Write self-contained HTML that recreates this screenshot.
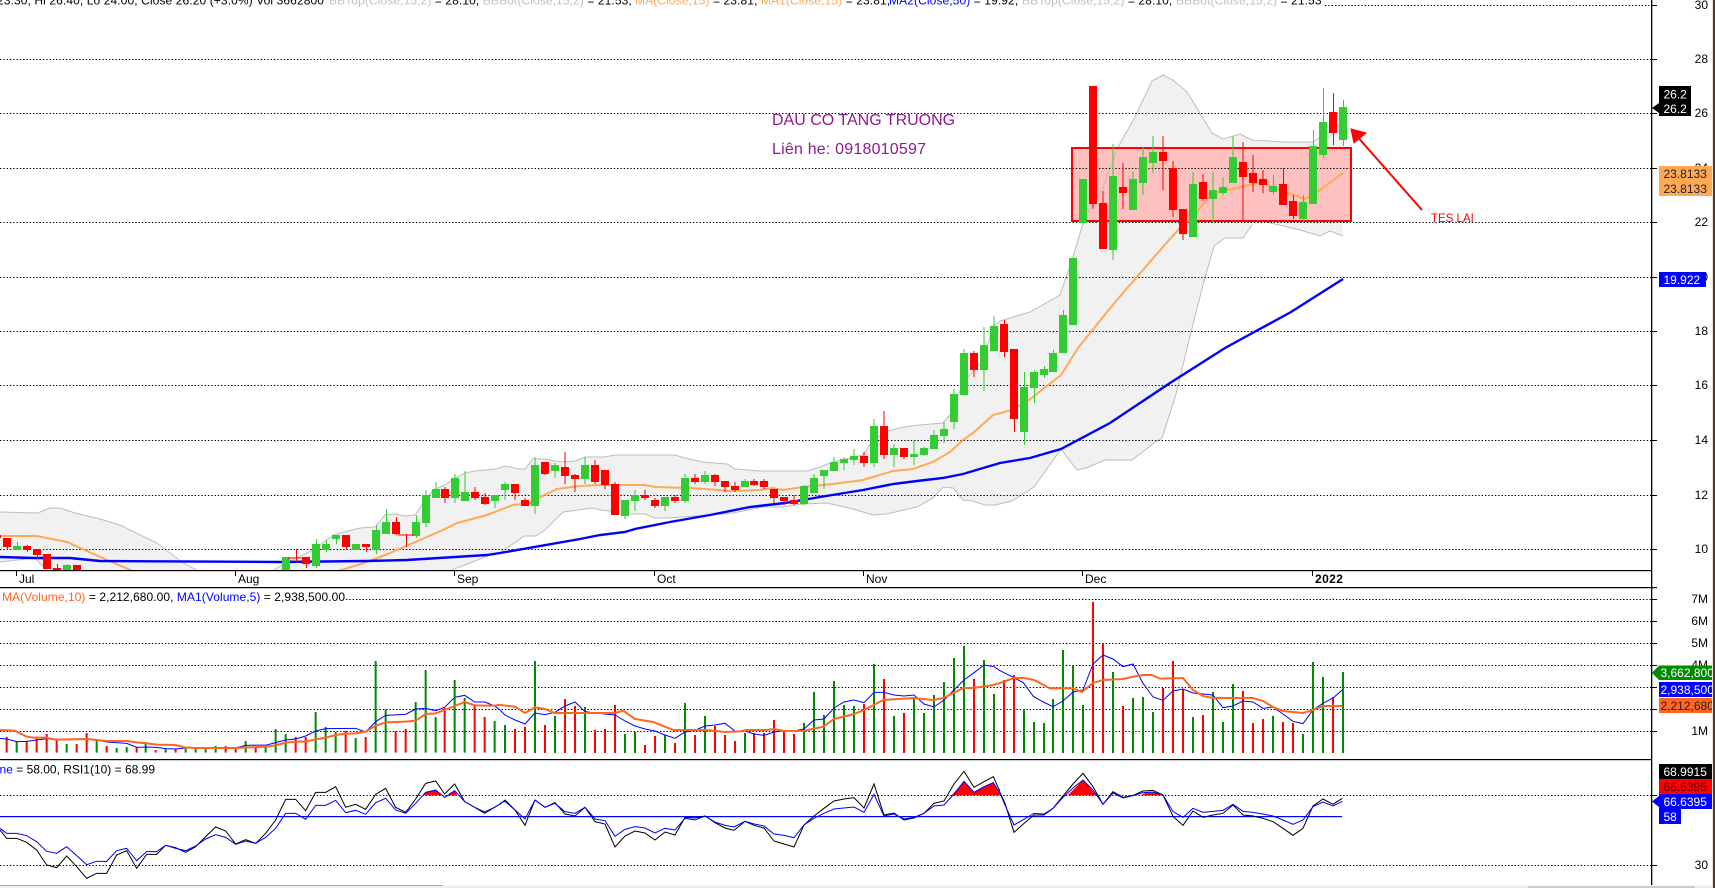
<!DOCTYPE html>
<html><head><meta charset="utf-8"><title>Chart</title>
<style>
html,body{margin:0;padding:0;background:#fff;width:1715px;height:888px;overflow:hidden}
svg{display:block}
text{font-family:"Liberation Sans",Arial,sans-serif;font-size:12px;fill:#000}
</style></head><body>
<svg width="1715" height="888" viewBox="0 0 1715 888" xmlns="http://www.w3.org/2000/svg">
<defs><clipPath id="p1"><rect x="0" y="0" width="1651" height="570"/></clipPath></defs>
<rect width="1715" height="888" fill="#fff"/>

<!-- band fill -->
<g clip-path="url(#p1)">
<path id="band" fill="#f1f1f1" d="M0 512L38 513 50 508 60 508 75 513 100 519 120 525 130 530 157 543 182 562 200 572 270 572 286 563 313 550 333 535 352 530 360 528 375 527 385 515 395 514 405 516 415 515 425 500 433 490 445 485 455 478 465 473 475 471 495 469 505 466 520 469 525 469 533 459 545 459 555 461 565 462 575 461 585 457 605 457 615 455 675 455 685 458 703 462 727 464 735 469 760 471 807 471 820 467 833 462 863 455 873 440 888 431 903 427 920 425 943 423 950 415 954 403 958 395 964 383 968 377 983 360 993 327 1000 321 1030 312 1060 295 1072 260 1085 217 1103 188 1118 147 1135 117 1152 81 1163 75 1173 80 1187 92 1198 110 1212 133 1223 139 1240 134 1252 140 1285 142 1313 142 1343 122 L1343 236 1330 231 1320 236 1300 230 1262 221 1252 225 1243 238 1225 238 1214 246 1203 285 1192 328 1176 394 1162 438 1154 443 1132 460 1105 460 1086 468 1077 470 1061 449 1034 487 1012 501 995 505 985 505 973 501 963 500 953 488 943 487 933 498 917 507 887 514 873 515 853 509 827 503 803 504 783 507 763 507 733 513 710 515 668 518 655 518 645 514 620 514 610 511 600 510 593 508 563 512 545 530 536 536 524 536 500 553 490 555 447 572 48 572 35 558 0 562Z"/>
<rect x="1072" y="148" width="279" height="73" fill="#ffc0c0"/>
<path fill="none" stroke="#bdbdbd" stroke-width="1" d="M0 512L38 513 50 508 60 508 75 513 100 519 120 525 130 530 157 543 182 562 200 572M270 572L286 563 313 550 333 535 352 530 360 528 375 527 385 515 395 514 405 516 415 515 425 500 433 490 445 485 455 478 465 473 475 471 495 469 505 466 520 469 525 469 533 459 545 459 555 461 565 462 575 461 585 457 605 457 615 455 675 455 685 458 703 462 727 464 735 469 760 471 807 471 820 467 833 462 863 455 873 440 888 431 903 427 920 425 943 423 950 415 954 403 958 395 964 383 968 377 983 360 993 327 1000 321 1030 312 1060 295 1072 260 1085 217 1103 188 1118 147 1135 117 1152 81 1163 75 1173 80 1187 92 1198 110 1212 133 1223 139 1240 134 1252 140 1285 142 1313 142 1343 122"/>
<path fill="none" stroke="#bdbdbd" stroke-width="1" d="M1343 236L1330 231 1320 236 1300 230 1262 221M1252 225L1243 238 1225 238 1214 246 1203 285 1192 328 1176 394 1162 438 1154 443 1132 460 1105 460 1086 468 1077 470 1061 449 1034 487 1012 501 995 505 985 505 973 501 963 500 953 488 943 487 933 498 917 507 887 514 873 515 853 509 827 503 803 504 783 507 763 507 733 513 710 515 668 518 655 518 645 514 620 514 610 511 600 510 593 508 563 512 545 530 536 536 524 536 500 553 490 555 447 572M48 572L35 558 0 562"/>
</g>

<!-- grids -->
<g stroke="#000" stroke-width="1" stroke-dasharray="1.4 1.9" fill="none">
<path d="M1325 5.5H1651"/>
<path d="M0 59.5H1651M0 113.5H1651M0 168.5H1651M0 222.5H1651M0 277.5H1651M0 331.5H1651M0 385.5H1651M0 440.5H1651M0 495.5H1651M0 549.5H1651"/>
<path d="M346 599.5H1651M0 621.5H1651M0 643.5H1651M0 665.5H1651M0 687.5H1651M0 709.5H1651M0 731.5H1651"/>
<path d="M0 795.5H1651M0 865.5H1651"/>
</g>
<!-- red box -->
<rect x="1072" y="148" width="279" height="73" fill="none" stroke="#f00" stroke-width="2"/>

<g clip-path="url(#p1)">
<!-- orange MA -->
<path fill="none" stroke="#ffa956" stroke-width="2" d="M0 536L37 536 67 542 107 560 135 572 335 572 367 562 390 553 443 530 457 523 487 515 513 505 530 503 540 497 557 489 580 486 600 485 645 485 655 487 690 488 705 489 730 491 760 490 773 488 783 490 803 487 833 484 863 480 873 477 893 471 913 469 933 462 950 452 963 440 973 433 993 415 1012 410 1029 400 1061 375 1078 348 1116 301 1149 263 1169 240 1180 228 1193 217 1208 198 1218 192 1237 188 1260 182 1280 190 1305 199 1320 190 1343 173"/>
<!-- blue MA2 -->
<path fill="none" stroke="#0000ff" stroke-width="2.4" d="M0 557L33 558 70 558 100 561 280 562 367 561 407 560 487 555 500 553 580 539 600 535 625 532 635 529 670 522 710 515 750 507 785 503 820 497 863 490 893 484 917 481 943 478 963 474 1000 463 1030 458 1061 449 1110 423 1170 383 1225 348 1291 312 1343 279"/>

<!-- candles: left part, true px -->
<path fill="#f00" d="M-7 535h8v3h-8zM3 538h8v9h-8zM23 546h8v4h-8zM33 549h8v6h-8zM43 554h8v15h-8zM53 568h8v7h-8zM73 565h8v7h-8zM302 557h8v7h-8zM342 535h8v12h-8zM362 544h8v3h-8zM392 522h8v12h-8z"/>
<path fill="#33cc33" d="M13 546h8v4h-8zM63 565h8v7h-8zM282 557h8v15h-8zM312 544h8v22h-8zM322 544h8v6h-8zM332 535h8v4h-8zM352 544h8v6h-8zM372 530h8v20h-8zM382 522h8v12h-8zM412 522h8v14h-8z"/>
<g fill="none" stroke-width="1">
<path stroke="#f00" d="M7.5 538V549M27.5 545V552M37.5 549V559M57.5 564V572M296.5 549V562M288 558H304M306.5 557V568M346.5 535V549M366.5 544V552M396.5 517V535M406.5 534V547M398 535H414"/>
<path stroke="#33cc33" d="M17.5 542V550M67.5 564V570M316.5 539V568M326.5 540V552M336.5 535V544M376.5 525V554M386.5 509V522M416.5 515V538"/>
</g>

<!-- zoom12 region -->
<g transform="translate(300 400) scale(.33333)">
<path fill="#33cc33" d="M366 285h24v84h-24zM396 267h24v27h-24zM453 234h24v60h-24zM483 276h24v27h-24zM573 285h24v18h-24zM603 252h24v18h-24zM693 195h24v123h-24zM753 195h24v18h-24zM843 195h24v42h-24z"/>
<path fill="#f00" d="M423 267h24v27h-24zM513 276h24v18h-24zM543 291h24v21h-24zM633 252h24v27h-24zM663 300h24v18h-24zM723 186h24v36h-24zM783 201h24v27h-24zM813 225h24v12h-24zM873 195h24v51h-24z"/>
<g fill="none" stroke-width="3">
<path stroke="#33cc33" d="M378 270V381M408 246V267M465 222V309M495 213V276M585 303V324M615 246V300M705 171V342M765 189V234M855 171V252"/>
<path stroke="#f00" d="M435 261V309M525 261V300M555 279V315M645 279V300M675 294V300M735 222V225M795 156V252M825 222V276M885 180V252"/>
</g>
</g>

<!-- zoom2 region -->
<g transform="translate(600 280) scale(.33333)">
<path fill="#f00" d="M3 570h24v45h-24zM33 612h24v93h-24zM123 645h24v9h-24zM153 660h24v18h-24zM213 651h24v12h-24zM273 594h24v12h-24zM333 585h24v21h-24zM363 603h24v18h-24zM393 618h24v12h-24zM450 603h24v12h-24zM480 603h24v18h-24zM510 627h24v27h-24zM540 651h24v12h-24zM570 660h24v12h-24zM780 528h24v21h-24zM840 438h24v87h-24zM900 504h24v27h-24zM1110 219h24v51h-24z"/>
<path fill="#33cc33" d="M63 660h24v48h-24zM93 645h24v18h-24zM183 651h24v27h-24zM243 594h24v69h-24zM303 585h24v21h-24zM423 603h24v18h-24zM600 618h24v54h-24zM630 594h24v45h-24zM660 570h24v18h-24zM690 546h24v27h-24zM720 537h24v12h-24zM750 528h24v12h-24zM810 438h24v111h-24zM870 504h24v21h-24zM930 522h24v9h-24zM960 504h24v21h-24zM990 465h24v42h-24zM1020 447h24v21h-24zM1050 342h24v84h-24zM1080 219h24v126h-24zM1140 195h24v75h-24zM1170 138h24v75h-24z"/>
<g fill="none" stroke-width="3">
<path stroke="#f00" d="M15 615V627M45 606V612M135 630V660M165 654V684M225 645V669M285 582V612M345 582V618M375 621V636M405 606V636M462 597V618M492 597V627M522 654V669M552 663V675M582 645V675M792 516V561M852 393V537M912 531V537M1122 213V291"/>
<path stroke="#33cc33" d="M75 708V717M105 630V693M195 678V693M255 582V669M315 573V612M435 597V603M612 615V675M642 582V594M672 588V627M702 531V546M732 531V570M762 507V555M822 417V561M882 492V561M942 483V555M972 501V528M1002 450V465M1032 426V489M1062 327V447M1092 207V219M1152 141V333M1182 108V138"/>
</g>
</g>

<!-- Late Nov candles -->
<path fill="#f00" d="M1000 324h8v28h-8zM1010 349h8v70h-8z"/>
<path fill="#33cc33" d="M1020 387h8v45h-8zM1030 372h8v16h-8zM1040 369h8v6h-8zM1049 353h8v19h-8zM1059 315h8v38h-8zM1069 258h8v67h-8z"/>
<path fill="none" stroke="#f00" d="M1004.5 320V357M1014.5 349V432"/>
<path fill="none" stroke="#33cc33" d="M1024.5 372V445M1034.5 370V403M1044.5 366V378M1053.5 350V372M1063.5 310V353"/>

<!-- zoom3 region -->
<g transform="translate(960 60) scale(.33333)">
<path fill="#33cc33" d="M357 357h24v132h-24zM447 348h24v222h-24zM507 357h24v93h-24zM537 291h24v78h-24zM567 276h24v33h-24zM687 372h24v159h-24zM747 390h24v27h-24zM777 381h24v18h-24zM807 291h24v78h-24z"/>
<path fill="#f00" d="M387 78h24v354h-24zM417 429h24v138h-24zM477 381h24v18h-24zM597 276h24v27h-24zM627 324h24v126h-24zM657 447h24v75h-24zM717 366h24v51h-24zM837 306h24v45h-24zM867 339h24v30h-24zM897 357h24v18h-24z"/>
<g fill="none" stroke-width="3">
<path stroke="#f00" d="M399 432V447M429 393V429M489 309V447M609 228V390M639 303V471M669 522V540M729 342V423M849 246V484M879 285V396M909 330V400"/>
<path stroke="#33cc33" d="M459 252V348M459 570V600M519 336V357M549 261V405M579 228V339M699 336V372M759 336V487M789 351V405M819 228V291"/>
</g>
</g>
<!-- last candles -->
<path fill="#33cc33" d="M1269 186h8v6h-8zM1299 202h8v17h-8zM1309 146h8v58h-8zM1319 122h8v33h-8zM1339 107h8v33h-8z"/>
<path fill="#f00" d="M1279 184h8v21h-8zM1289 201h8v15h-8zM1329 112h8v21h-8z"/>
<path fill="none" stroke="#33cc33" d="M1273.5 175V195M1303.5 195V222M1313.5 130V204M1323.5 88V158M1343.5 100V146"/>
<path fill="none" stroke="#f00" d="M1283.5 168V205M1293.5 195V219M1333.5 93V145"/>
</g>

<!-- texts pane 1 -->
<text x="772" y="125" style="font-size:16px;fill:#8e1a8e">DAU CO TANG TRUONG</text>
<text x="772" y="154" style="font-size:16px;fill:#8e1a8e;letter-spacing:.2px">Liên he: 0918010597</text>
<text x="1431" y="222" style="font-size:11.5px;fill:#f00">TES LAI</text>
<path d="M1422 210L1355 134" stroke="#f00" stroke-width="2" fill="none"/>
<path d="M1351 129L1354 143 1366 133Z" fill="#f00" stroke="#f00"/>

<!-- header -->
<text x="-3" y="4.5" style="letter-spacing:.1px">23.30, Hi 26.40, Lo 24.00, Close 26.20 (+3.0%) Vol 3662800 <tspan x="329" fill="#c0c0c0">BBTop(Close,15,2)</tspan> = 28.10, <tspan fill="#c0c0c0">BBBot(Close,15,2)</tspan> = 21.53, <tspan x="635" fill="#ffa956">MA(Close,15)</tspan> = 23.81, <tspan fill="#ffa956">MA1(Close,15)</tspan> = 23.81, <tspan x="889" fill="#0000ff">MA2(Close,50)</tspan> = 19.92, <tspan x="1022" fill="#c0c0c0">BBTop(Close,15,2)</tspan> = 28.10, <tspan x="1176" fill="#c0c0c0">BBBot(Close,15,2)</tspan> = 21.53</text>

<!-- frame lines -->
<g fill="#000">
<rect x="0" y="570" width="1652" height="1.2"/>
<rect x="0" y="587" width="1657" height="1.2"/>
<rect x="0" y="759" width="1652" height="1.2"/>
<rect x="1651" y="0" width="1.3" height="885"/>
<path d="M1652 5h5v1h-5zM1652 59h5v1h-5zM1652 113h5v1h-5zM1652 168h5v1h-5zM1652 222h5v1h-5zM1652 277h5v1h-5zM1652 331h5v1h-5zM1652 385h5v1h-5zM1652 440h5v1h-5zM1652 495h5v1h-5zM1652 549h5v1h-5zM1652 599h5v1h-5zM1652 621h5v1h-5zM1652 643h5v1h-5zM1652 665h5v1h-5zM1652 687h5v1h-5zM1652 709h5v1h-5zM1652 731h5v1h-5zM1652 795h5v1h-5zM1652 865h5v1h-5z"/>
<path d="M16 571h1v5h-1zM235 571h1v5h-1zM454 571h1v5h-1zM654 571h1v5h-1zM863 571h1v5h-1zM1082 571h1v5h-1zM1312 571h1v5h-1z"/>
</g>
<text x="19" y="583">Jul</text>
<text x="238" y="583">Aug</text>
<text x="457" y="583">Sep</text>
<text x="657" y="583">Oct</text>
<text x="866" y="583">Nov</text>
<text x="1085" y="583">Dec</text>
<text x="1315" y="583" font-weight="bold" style="letter-spacing:.4px">2022</text>

<!-- volume text -->
<text x="2" y="601" style="letter-spacing:.06px"><tspan fill="#ff6622">MA(Volume,10)</tspan> = 2,212,680.00, <tspan fill="#0000ff">MA1(Volume,5)</tspan> = 2,938,500.00</text>

<!-- volume bars -->
<g fill="none" stroke-width="2">
<g transform="translate(0 690) scale(.33333)" stroke-width="6">
<path stroke="#f00" d="M20 141V188M80 155V188M110 143V188M140 132V188M170 150V188M230 162V188M260 129V188M320 168V188M410 171V188M467 180V188M527 177V188M677 168V188M707 171V188M767 171V188M887 141V188M917 141V188M1037 123V188M1097 141V188M1187 123V188M1217 117V188M1334 54V188M1424 48V188M1454 81V188"/>
<path stroke="#008a00" d="M50 155V188M200 162V188M290 150V188M350 174V188M380 171V188M437 156V188M497 177V188M557 174V188M587 177V188M617 171V188M647 168V188M737 153V188M797 168V188M827 117V188M857 132V188M947 66V188M977 111V188M1007 126V188M1067 144V188M1127 -87V188M1157 58V188M1247 36V188M1277 -60V188M1307 81V188M1364 -30V188M1394 24V188M1484 93V188"/>
</g>
<g transform="translate(500 560) scale(.33333)" stroke-width="6">
<path stroke="#f00" d="M45 507V579M75 501V579M135 495V579M195 417V579M225 438V579M285 510V579M315 507V579M345 435V579M435 555V579M465 528V579M525 549V579M585 525V579M645 498V579M675 525V579M705 543V579M762 519V579M792 519V579M822 480V579M852 516V579M882 522V579M1092 432V579M1152 357V579M1212 459V579M1422 357V579"/>
<path stroke="#008a00" d="M15 495V579M105 303V579M165 468V579M255 441V579M375 522V579M405 516V579M495 525V579M555 429V579M615 468V579M735 519V579M912 489V579M942 396V579M972 465V579M1002 363V579M1032 435V579M1062 438V579M1122 312V579M1182 468V579M1242 417V579M1272 459V579M1302 405V579M1332 366V579M1362 294V579M1392 258V579M1452 300V579M1482 402V579"/>
</g>
<g transform="translate(1000 560) scale(.33333)" stroke-width="6">
<path stroke="#f00" d="M12 360V579M42 345V579M279 126V579M309 252V579M369 438V579M489 384V579M519 303V579M549 387V579M609 465V579M729 393V579M759 489V579M789 477V579M849 486V579M879 489V579M999 411V579"/>
<path stroke="#008a00" d="M72 447V579M102 486V579M132 489V579M159 417V579M189 270V579M219 315V579M249 435V579M339 336V579M399 414V579M429 411V579M459 456V579M579 471V579M639 396V579M669 486V579M699 372V579M819 468V579M909 522V579M939 306V579M969 351V579M1029 336V579"/>
</g>
</g>

<!-- volume MAs: blue thin, orange thick -->
<g fill="none">
<g transform="translate(0 690) scale(.33333)">
<path stroke="#0000ff" stroke-width="3" d="M0 145L20 147 50 155 80 154 110 150 140 146 170 150 260 147 290 150 320 156 380 160 410 172 440 171 470 172 497 176 527 177 557 174 705 174 737 166 800 165 827 158 857 150 887 147 917 138 947 123 977 116 1067 115 1097 126 1127 95 1157 76 1217 73 1247 57 1277 55 1307 62 1334 52 1364 22 1394 16 1424 36 1454 36 1484 48 1500 60"/>
<path stroke="#ff6622" stroke-width="6" d="M0 120L45 122 60 130 80 140 100 143 135 143 170 149 260 147 290 150 320 153 380 153 410 157 440 160 470 164 525 165 555 172 585 174 705 174 800 170 827 166 857 158 890 155 917 155 947 148 977 143 1007 135 1037 131 1067 130 1097 125 1127 107 1157 97 1217 95 1247 92 1277 72 1307 70 1334 60 1364 48 1394 36 1424 46 1454 47 1484 47 1500 44"/>
</g>
<g transform="translate(500 560) scale(.33333)">
<path stroke="#0000ff" stroke-width="3" d="M0 450L15 465 45 480 75 492 105 459 135 464 165 457 195 438 225 426 255 455 285 459 315 462 345 465 375 483 405 498 435 507 465 513 495 525 525 535 555 516 585 511 615 498 645 495 675 490 705 513 735 513 762 522 792 526 822 516 852 512 882 513 912 507 942 480 972 477 1002 444 1032 426 1062 420 1092 428 1122 397 1152 397 1182 405 1212 408 1242 405 1272 432 1302 441 1332 420 1362 390 1392 360 1422 338 1452 315 1482 320 1500 332"/>
<path stroke="#ff6622" stroke-width="6" d="M0 435L45 440 75 459 105 442 135 447 165 459 345 459 370 452 405 477 460 486 520 510 590 510 620 510 675 516 720 514 740 510 800 510 822 507 852 513 910 513 970 500 1002 477 1062 462 1092 450 1150 420 1240 414 1300 420 1330 414 1390 384 1420 384 1480 375 1500 369"/>
</g>
<g transform="translate(1000 560) scale(.33333)">
<path stroke="#0000ff" stroke-width="3" d="M0 332L40 352 70 368 100 409 130 426 159 440 189 423 219 396 249 390 279 312 309 285 339 297 369 320 399 312 429 370 459 411 489 421 519 393 549 387 579 399 609 402 639 405 669 443 699 438 729 423 759 426 789 445 819 441 849 462 879 484 909 491 939 450 969 430 999 414 1027 390"/>
<path stroke="#ff6622" stroke-width="6" d="M0 369L42 354 72 354 102 360 150 385 219 385 246 396 279 369 309 360 369 357 400 350 429 345 455 345 480 356 549 354 579 390 609 408 639 414 700 414 759 414 789 423 819 441 849 453 879 456 909 459 939 450 969 438 1027 438"/>
</g>
</g>

<!-- RSI -->
<rect x="0" y="816" width="1342" height="1.2" fill="#0000ff"/>
<text x="155" y="773.5" text-anchor="end"><tspan fill="#0000ff">Line</tspan> = 58.00, RSI1(10) = 68.99</text>
<g fill="#f00">
<path transform="translate(0 690) scale(.33333)" d="M1270 316L1277 307 1307 300 1325 316ZM1345 316L1364 302 1372 316Z"/>
<path transform="translate(500 560) scale(.33333)" d="M1355 706L1392 664 1420 697 1452 680 1480 668 1500 700 1500 706Z"/>
<path transform="translate(1000 560) scale(.33333)" d="M203 706L249 660 290 706ZM420 706L440 698 470 698 485 706Z"/>
</g>
<g fill="none" stroke-width="3">
<g transform="translate(0 690) scale(.33333)">
<path stroke="#000" d="M0 420L20 445 50 445 80 457 110 480 140 525 170 533 200 498 230 530 260 565 290 550 320 550 350 495 380 482 410 535 440 493 470 493 497 466 527 473 557 487 587 470 617 440 647 411 677 423 707 462 737 449 767 460 797 430 827 390 857 328 887 328 917 362 947 307 977 307 1007 290 1037 352 1067 343 1097 358 1127 313 1157 295 1187 352 1217 367 1247 327 1277 280 1307 273 1334 312 1364 282 1394 335 1424 352 1454 370 1484 352 1500 342"/>
<path stroke="#0000ff" d="M0 415L20 430 50 430 80 437 110 455 140 484 170 490 200 470 230 497 260 524 290 514 320 514 350 482 380 475 410 512 440 485 470 485 497 466 527 475 557 482 587 468 617 447 647 434 677 442 707 463 737 453 767 460 797 442 827 415 857 370 887 370 917 388 947 346 977 346 1007 331 1037 368 1067 361 1097 373 1127 338 1157 325 1187 360 1217 370 1247 340 1277 307 1307 300 1334 322 1364 302 1394 335 1424 352 1454 366 1484 352 1500 342"/>
</g>
<g transform="translate(500 560) scale(.33333)">
<path stroke="#000" d="M0 733L15 720 45 750 75 796 105 720 135 742 165 728 195 762 225 768 255 742 285 785 315 792 345 861 375 828 405 813 435 819 465 840 495 816 525 825 555 772 585 774 615 768 645 788 675 804 702 811 735 784 762 796 792 804 822 843 852 852 882 861 912 795 942 768 972 745 1002 723 1032 717 1062 713 1092 744 1122 672 1152 765 1182 759 1212 780 1242 774 1272 760 1302 730 1332 723 1362 672 1392 634 1422 682 1452 665 1480 650 1500 695"/>
<path stroke="#0000ff" d="M0 730L15 724 45 750 75 777 105 720 135 742 165 730 195 755 225 760 255 742 285 777 315 782 345 829 375 808 405 800 435 804 465 819 495 805 525 810 555 775 585 780 615 768 645 786 675 796 702 801 735 784 762 792 792 798 822 822 852 826 882 833 912 795 942 775 972 760 1002 747 1032 744 1062 741 1092 757 1122 703 1152 768 1182 762 1212 777 1242 772 1272 760 1302 738 1332 735 1362 702 1392 664 1422 697 1452 680 1480 668 1500 700"/>
</g>
<g transform="translate(1000 560) scale(.33333)">
<path stroke="#000" d="M0 697L15 730 42 817 72 790 102 765 132 765 159 745 189 708 219 672 249 640 279 680 309 733 339 695 369 712 399 706 429 693 459 691 489 705 519 769 549 796 579 753 609 772 639 765 669 760 699 735 729 765 759 768 789 775 819 785 849 805 879 826 909 805 939 738 969 717 999 733 1027 715"/>
<path stroke="#0000ff" d="M0 700L15 735 42 795 72 778 102 760 132 762 159 745 189 712 219 684 249 660 279 690 309 733 339 699 369 714 399 707 429 698 459 696 489 705 519 755 549 772 579 745 609 757 639 754 669 751 699 733 729 754 759 757 789 762 819 768 849 780 879 793 909 780 939 740 969 726 999 738 1027 724"/>
</g>
</g>

<!-- axis labels -->
<g text-anchor="end">
<text x="1708" y="9">30</text>
<text x="1708" y="63">28</text>
<text x="1708" y="117">26</text>
<text x="1708" y="172">24</text>
<text x="1708" y="226">22</text>
<text x="1708" y="281">20</text>
<text x="1708" y="335">18</text>
<text x="1708" y="389">16</text>
<text x="1708" y="444">14</text>
<text x="1708" y="499">12</text>
<text x="1708" y="553">10</text>
<text x="1708" y="603">7M</text>
<text x="1708" y="625">6M</text>
<text x="1708" y="647">5M</text>
<text x="1708" y="669">4M</text>
<text x="1708" y="735">1M</text>
<text x="1708" y="869">30</text>
</g>

<!-- value labels -->
<path d="M1659 86H1691V116H1659V113L1652 108 1659 103Z" fill="#000"/>
<text x="1663.5" y="98.5" style="fill:#fff">26.2</text>
<text x="1663.5" y="113" style="fill:#fff">26.2</text>
<rect x="1659" y="166" width="53" height="30" fill="#ffa956"/>
<text x="1663.5" y="178" style="fill:#222">23.8133</text>
<text x="1663.5" y="193" style="fill:#222">23.8133</text>
<rect x="1659" y="272" width="47" height="15" fill="#0000ff"/>
<text x="1663.5" y="284" style="fill:#fff">19.922</text>

<svg x="1652" y="660" width="60" height="60">
<path d="M7 5.5H60V20H7L0 13Z" fill="#008a00"/>
<rect x="7" y="22" width="53" height="15" fill="#0000ff"/>
<rect x="7" y="38" width="53" height="15" fill="#ff6622"/>
<text x="8.5" y="17" style="fill:#fff">3,662,800</text>
<text x="8.5" y="34" style="fill:#fff">2,938,500</text>
<text x="8.5" y="50" style="fill:#222">2,212,680</text>
</svg>

<rect x="1659" y="764" width="53" height="15" fill="#000"/>
<rect x="1659" y="779" width="53" height="15" fill="#f00"/>
<path d="M1659 794H1712V809H1659V807L1652 801.5 1659 796Z" fill="#0000ff"/>
<rect x="1659" y="809" width="22" height="15" fill="#0000ff"/>
<text x="1663.5" y="776" style="fill:#fff">68.9915</text>
<text x="1663.5" y="791" style="fill:#500">66.6395</text>
<text x="1663.5" y="806" style="fill:#fff">66.6395</text>
<text x="1663.5" y="821" style="fill:#fff">58</text>

<!-- bottom strip and right edge -->
<rect x="0" y="885.5" width="1713" height="2.5" fill="#eeeeee"/>
<rect x="0" y="885" width="443" height="1" fill="#b0b0b0"/>
<rect x="1528" y="886" width="167" height="2" fill="#cdcdcd"/>
<rect x="1712" y="0" width="1" height="888" fill="#ffe0b8"/>
<rect x="1713" y="0" width="2" height="888" fill="#2f4163"/>
</svg>
</body></html>
